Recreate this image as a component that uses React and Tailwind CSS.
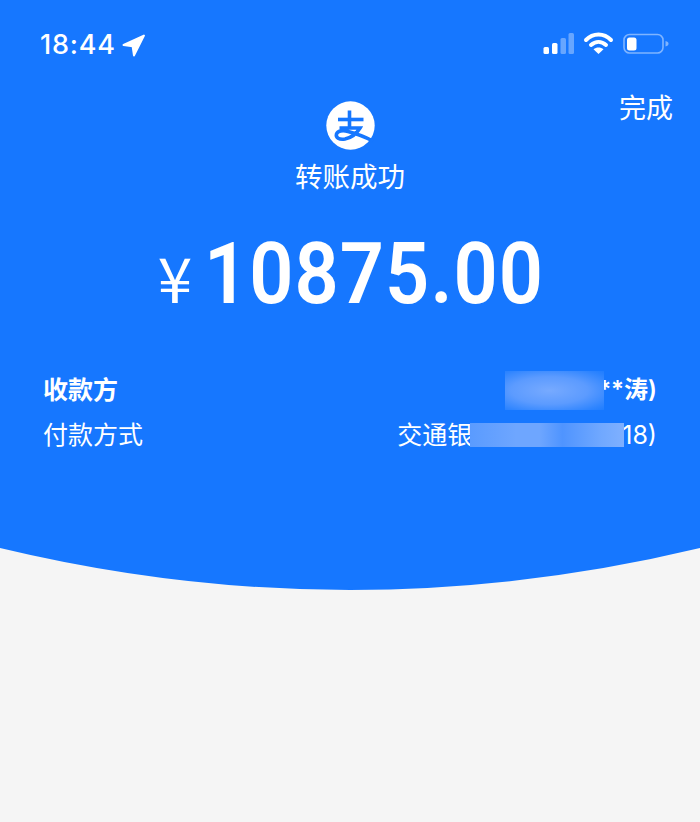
const CJK = "font-['Inter','Noto_Sans_CJK_SC',sans-serif]";

function LocationArrow() {
  return (
    <svg width="25" height="25" viewBox="0 0 24 24" className="block">
      <path d="M22 2.5 L2.5 11.5 L11.2 12.8 L12.5 21.5 Z" fill="white" stroke="white" strokeWidth="2" strokeLinejoin="round" />
    </svg>
  );
}

function StatusIcons() {
  return (
    <svg width="126" height="30" viewBox="0 0 126 30" className="block">
      <rect x="0.5" y="18" width="5.5" height="7" rx="1.5" fill="white" />
      <rect x="9" y="14" width="5.5" height="11" rx="1.5" fill="white" />
      <rect x="17.5" y="9" width="5.5" height="16" rx="1.5" fill="white" fillOpacity="0.35" />
      <rect x="25.5" y="4" width="5.5" height="21" rx="1.5" fill="white" fillOpacity="0.35" />
      <path d="M43 11 C50 3.8 61 3.8 68 11" fill="none" stroke="white" strokeWidth="4" strokeLinecap="round" />
      <path d="M48 16 C52.5 12 58.5 12 63 16" fill="none" stroke="white" strokeWidth="4" strokeLinecap="round" />
      <path d="M55.5 25 L50.5 20.2 C53.5 18 57.5 18 60.5 20.2 Z" fill="white" />
      <rect x="81" y="5.5" width="39" height="18.5" rx="5.5" fill="none" stroke="white" strokeOpacity="0.45" strokeWidth="1.6" />
      <rect x="84" y="8.5" width="9.5" height="13" rx="2.5" fill="white" />
      <path d="M122.5 12 C124.5 12.6 125.5 13.4 125.5 14.8 C125.5 16.2 124.5 17 122.5 17.6 Z" fill="white" fillOpacity="0.45" />
    </svg>
  );
}

function AlipayLogo() {
  return (
    <svg width="49" height="49" viewBox="0 0 49 49" className="block">
      <circle cx="24.5" cy="24.5" r="24.2" fill="white" />
      <g fill="none" stroke="#1677ff" strokeWidth="3.6" strokeLinecap="butt">
        <path d="M12 18.5 H37.5" />
        <path d="M23.5 9.5 V27" />
        <path d="M13.5 27 H34 C31 32 26 36.5 19 38 C13 39 9.5 36.5 10.5 33 C11.5 30 16.5 29 22 30.5 C30 32.5 39 36 47 40" />
      </g>
    </svg>
  );
}

export default function App() {
  return (
    <div className={`w-[700px] h-[822px] bg-[#f5f5f5] overflow-hidden ${CJK}`}>
      <div className="h-[548px] bg-[#1677ff] text-white">
        {/* status bar */}
        <div className="h-[90px] pl-10 pr-[31px] flex justify-between items-start pt-[30px]">
          <div className="flex items-center gap-[5px]">
            <span className="text-[27px] leading-[30px] font-medium tracking-[0.8px] font-['Inter',sans-serif]">18:44</span>
            <LocationArrow />
          </div>
          <div className="-mt-[1px]">
            <StatusIcons />
          </div>
        </div>

        <div className="flex justify-end pr-[27px] h-0">
          <span className="text-[27px] leading-[36px] pt-[1px]">完成</span>
        </div>

        {/* title */}
        <div className="flex flex-col items-center pt-[11px]">
          <AlipayLogo />
          <div className="mt-[8px] text-[27.5px] leading-[38px]">转账成功</div>
        </div>

        {/* amount */}
        <div className="flex justify-center items-baseline mt-[23px] h-[110px] pl-[4px]">
          <span className="text-[62px] leading-[110px] mr-[10px] font-['Noto_Sans_CJK_SC',sans-serif]">¥</span>
          <span className="text-[86px] leading-[110px] font-semibold tracking-[1.2px] -mx-[17px] scale-x-[0.9] font-['Roboto',sans-serif]">10875.00</span>
        </div>

        {/* rows */}
        <div className="mt-[38px] pl-[43px] pr-11">
          <div className="flex justify-between items-center h-[46px]">
            <span className="text-[25px] leading-[36px] font-bold">收款方</span>
            <div className="flex items-center -mr-[1px]">
              <div className="relative z-10 -mr-[6px] w-[99px] h-[39px] bg-[radial-gradient(ellipse_at_45%_50%,#77aaff_0%,#5c9bff_50%,#2f85ff_85%,#1f7dff_100%)]" />
              <span className="text-[24px] leading-[36px] font-semibold">**涛)</span>
            </div>
          </div>
          <div className="flex justify-between items-center h-[44px]">
            <span className="text-[25px] leading-[36px]">付款方式</span>
            <div className="flex items-center -mr-[1px]">
              <span className="text-[25px] leading-[36px]">交通银</span>
              <div className="relative z-10 w-[154px] h-[24px] -ml-[2px] -mr-[2px] bg-[linear-gradient(90deg,#5a9bff_0%,#6ea6ff_30%,#6ea6ff_45%,#4f94ff_60%,#70a8ff_85%,#7fb0ff_100%)]" />
              <span className="text-[25px] leading-[36px]">18)</span>
            </div>
          </div>
        </div>
      </div>

      {/* curved bottom edge */}
      <svg width="700" height="42" viewBox="0 0 700 42" className="block">
        <path d="M0 0 Q350 84 700 0 Z" fill="#1677ff" />
      </svg>
    </div>
  );
}
